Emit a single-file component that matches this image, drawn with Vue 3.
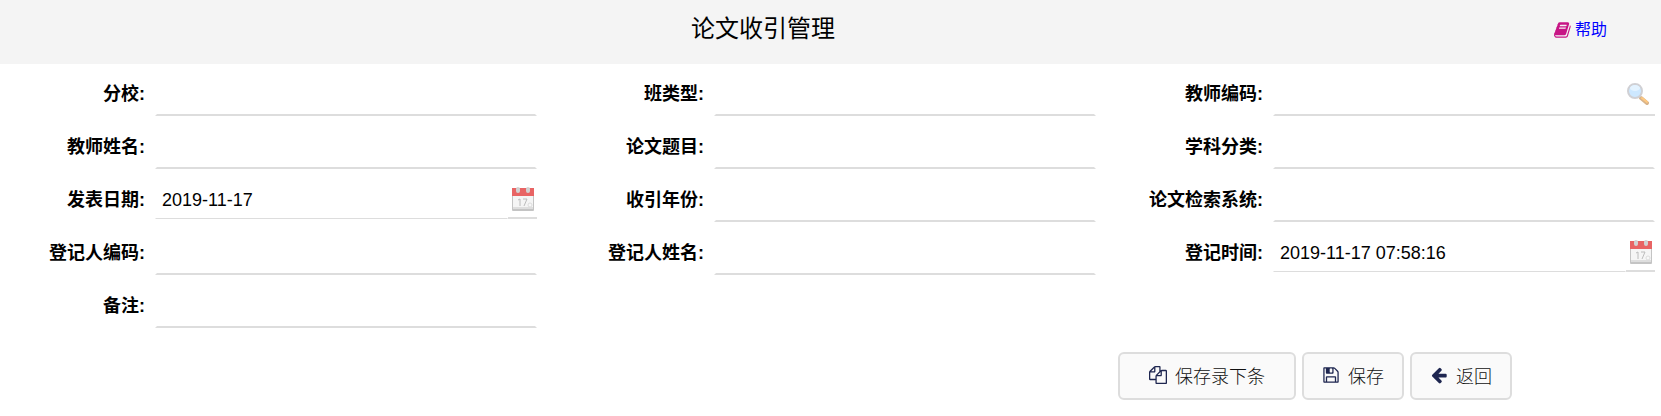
<template>
  <div class="page">
    <header class="header">
      <h1>论文收引管理</h1>
      <a href="#" class="help">
        <svg viewBox="0 0 1792 1792" aria-hidden="true"><path :d="icons.book" /></svg>
        <span>帮助</span>
      </a>
    </header>

    <form @submit.prevent>
      <div class="fields">
        <div v-for="field in fields" :key="field.id" class="field">
          <label :for="field.id">{{ field.label }}:</label>
          <div class="control" :class="field.type">
            <input :id="field.id" v-model="form[field.id]" type="text" autocomplete="off">
            <button v-if="field.type === 'date'" type="button" class="picker" aria-label="选择日期">
              <svg viewBox="0 0 22 24">
                <rect x="0" y="2" width="22" height="22" rx="1" fill="#c4c4c4" />
                <rect x="1" y="9" width="20" height="13" fill="#f5f5f5" />
                <path d="M0 1h22v8H0z" fill="#e86464" />
                <path d="M1 20h20v2H1z" fill="#dedede" />
                <rect x="4" y="0" width="4" height="6" rx="2" fill="#d2d2d2" />
                <rect x="14" y="0" width="4" height="6" rx="2" fill="#d2d2d2" />
                <path d="M6 13l2-1v7M11 12h4l-3 7" fill="none" stroke="#bcbcbc" stroke-width="1" />
                <circle cx="18" cy="18" r="2" fill="#f8f8f8" stroke="#dcdcdc" />
              </svg>
            </button>
            <button v-if="field.type === 'search'" type="button" class="picker" aria-label="查找">
              <svg viewBox="0 0 22 24">
                <path d="M14 16l6 5" stroke="#d9b48a" stroke-width="4" stroke-linecap="round" />
                <path d="M15 16l5 4" stroke="#ffc981" stroke-width="2" stroke-linecap="round" />
                <circle cx="8" cy="9" r="7" fill="#cde8ff" stroke="#d0d0d4" stroke-width="2" />
                <ellipse cx="8" cy="6" rx="5" ry="3" fill="#e4f3ff" />
              </svg>
            </button>
          </div>
        </div>
      </div>

      <div class="actions">
        <button v-for="action in actions" :key="action.text" type="button" :class="{ wide: action.wide }">
          <svg viewBox="0 0 1792 1792" aria-hidden="true"><path :d="icons[action.icon]" /></svg>
          <span>{{ action.text }}</span>
        </button>
      </div>
    </form>
  </div>
</template>

<script setup>
import { reactive } from 'vue'

const fields = [
  { id: 'school', label: '分校' },
  { id: 'classType', label: '班类型' },
  { id: 'teacherCode', label: '教师编码', type: 'search' },
  { id: 'teacherName', label: '教师姓名' },
  { id: 'paperTitle', label: '论文题目' },
  { id: 'subject', label: '学科分类' },
  { id: 'publishDate', label: '发表日期', type: 'date' },
  { id: 'indexYear', label: '收引年份' },
  { id: 'indexSystem', label: '论文检索系统' },
  { id: 'registrarCode', label: '登记人编码' },
  { id: 'registrarName', label: '登记人姓名' },
  { id: 'registerTime', label: '登记时间', type: 'date' },
  { id: 'remark', label: '备注' }
]

const form = reactive({
  publishDate: '2019-11-17',
  registerTime: '2019-11-17 07:58:16'
})

const actions = [
  { text: '保存录下条', icon: 'copy', wide: true },
  { text: '保存', icon: 'save' },
  { text: '返回', icon: 'back' }
]

const icons = {
  book: 'M1639 478q40 57 18 129l-275 906q-19 64-76.5 107.5t-122.5 43.5h-923q-77 0-148.5-53.5t-99.5-131.5q-24-67-2-127 0-4 3-27t4-37q1-8-3-21.5t-3-19.5q2-11 8-21t16.5-23.5 16.5-23.5q23-38 45-91.5t30-91.5q3-10 .5-30t-.5-28q3-11 17-28t17-23q21-36 42-92t25-90q1-9-2.5-32t.5-28q4-13 22-30.5t22-22.5q19-26 42.5-84.5t27.5-96.5q1-8-3-25.5t-2-26.5q2-8 9-18t18-23 17-21q8-12 16.5-30.5t15-35 16-36 19.5-32 26.5-23.5 36-11.5 47.5 5.5l-1 3q38-9 51-9h761q74 0 114 56t18 130l-274 906q-36 119-71.5 153.5t-128.5 34.5h-869q-27 0-38 15-11 16-1 43 24 70 144 70h923q29 0 56-15.5t35-41.5l300-987q7-22 5-57 38 15 59 43zm-1064 2q-4 13 2 22.5t20 9.5h608q13 0 25.5-9.5t16.5-22.5l21-64q4-13-2-22.5t-20-9.5h-608q-13 0-25.5 9.5t-16.5 22.5zm-83 256q-4 13 2 22.5t20 9.5h608q13 0 25.5-9.5t16.5-22.5l21-64q4-13-2-22.5t-20-9.5h-608q-13 0-25.5 9.5t-16.5 22.5z',
  copy: 'M1696 384q40 0 68 28t28 68v1216q0 40-28 68t-68 28h-960q-40 0-68-28t-28-68v-288h-544q-40 0-68-28t-28-68v-672q0-40 20-88t48-76l408-408q28-28 76-48t88-20h416q40 0 68 28t28 68v328q68-40 128-40h416zm-544 213l-299 299h299v-299zm-640-384l-299 299h299v-299zm196 647l316-316v-416h-384v416q0 40-28 68t-68 28h-416v640h512v-256q0-40 20-88t48-76zm956 804v-1152h-384v416q0 40-28 68t-68 28h-416v640h896z',
  save: 'M512 1536h768v-384h-768v384zm896 0h128v-896q0-14-10-38.5t-20-34.5l-281-281q-10-10-34-20t-39-10v416q0 40-28 68t-68 28h-576q-40 0-68-28t-28-68v-416h-128v1280h128v-416q0-40 28-68t68-28h832q40 0 68 28t28 68v416zm-384-928v-320q0-13-9.5-22.5t-22.5-9.5h-192q-13 0-22.5 9.5t-9.5 22.5v320q0 13 9.5 22.5t22.5 9.5h192q13 0 22.5-9.5t9.5-22.5zm640 32v928q0 40-28 68t-68 28h-1344q-40 0-68-28t-28-68v-1344q0-40 28-68t68-28h928q40 0 88 20t76 48l280 280q28 28 48 76t20 88z',
  back: 'M1664 896v128q0 53-32.5 90.5t-84.5 37.5h-704l293 294q38 36 38 90t-38 90l-75 76q-37 37-90 37-52 0-91-37l-651-652q-37-37-37-90 0-52 37-91l651-650q38-38 91-38 52 0 90 38l75 74q38 38 38 91t-38 91l-293 293h704q52 0 84.5 37.5t32.5 90.5z'
}
</script>

<style>
body {
  margin: 0;
  background: #fff;
}
</style>

<style scoped>
.page {
  font-family: "Liberation Sans", "Noto Sans CJK SC", sans-serif;
  color: #000;
}

.header {
  display: flex;
  align-items: flex-start;
  height: 64px;
  background: #f4f4f4;
}

h1 {
  flex: 1;
  margin: 0;
  font-size: 24px;
  font-weight: 400;
  line-height: 58px;
  text-align: center;
}

.help {
  display: flex;
  align-items: center;
  gap: 3px;
  padding: 0 54px 0 28px;
  font-size: 16px;
  font-weight: 400;
  line-height: 60px;
  color: #00f;
  text-decoration: none;
}

.help svg {
  width: 18px;
  height: 18px;
  fill: #c71585;
}

.fields {
  display: grid;
  grid-template-columns: repeat(3, 1fr);
  column-gap: 22px;
  padding-right: 6px;
}

.field {
  display: flex;
  align-items: flex-start;
  height: 53px;
}

label {
  width: 145px;
  padding-right: 10px;
  font-size: 18px;
  font-weight: bold;
  line-height: 60px;
  text-align: right;
}

.control {
  flex: 1;
  display: flex;
  align-items: flex-end;
  height: 52px;
}

.control.date {
  height: 49px;
}

input {
  flex: 1;
  min-width: 0;
  box-sizing: border-box;
  height: 40px;
  padding: 0 6px;
  border: 2px solid transparent;
  border-bottom-color: #ddd;
  background: transparent;
  font-family: inherit;
  font-size: 18px;
  outline: none;
}

.date input {
  height: 38px;
  border-width: 1px;
}

.search input {
  border-right: 0;
}

.picker {
  box-sizing: border-box;
  display: flex;
  align-items: center;
  justify-content: center;
  width: 29px;
  height: 38px;
  padding: 0;
  border: 0;
  border-bottom: 2px solid #ddd;
  background: transparent;
  cursor: pointer;
}

.search .picker {
  height: 42px;
  padding-right: 6px;
}

.picker svg {
  flex: none;
  width: 22px;
  height: 24px;
}

.actions {
  display: flex;
  justify-content: flex-end;
  gap: 6px;
  padding: 23px 149px 16px 0;
}

.actions button {
  display: flex;
  align-items: center;
  gap: 8px;
  height: 48px;
  padding: 0 18px 2px;
  border: 2px solid #ddd;
  border-radius: 6px;
  background: #fafafa;
  color: #111;
  font-family: inherit;
  font-size: 18px;
  font-weight: 300;
  cursor: pointer;
}

.actions button.wide {
  padding: 0 29px 2px;
}

.actions svg {
  width: 18px;
  height: 18px;
  fill: #1e2650;
}
</style>
